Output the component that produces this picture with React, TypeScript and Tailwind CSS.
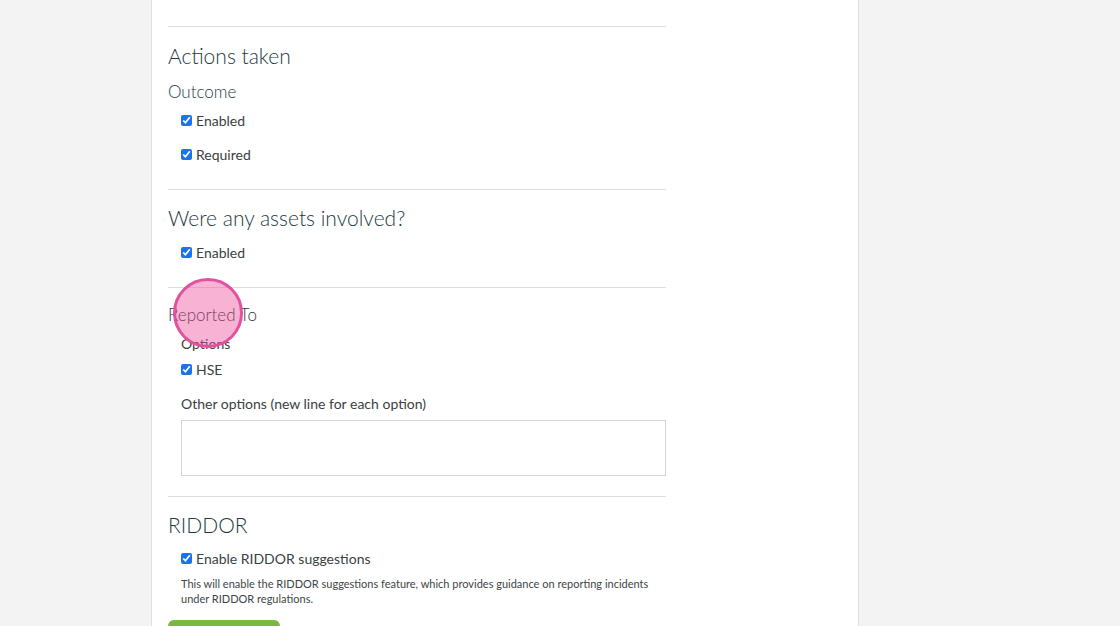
import React from 'react';

const font = { fontFamily: 'Lato, "Noto Sans", sans-serif' };

interface CheckRowProps {
  label: string;
  className?: string;
}

const CheckRow = ({ label, className = '' }: CheckRowProps) => (
  <label className={`flex items-center h-5 pl-[13px] text-[14px] text-[#394143] ${className}`}>
    <input type="checkbox" defaultChecked className="w-[11px] h-[11px] mr-[4px] accent-[#1a73e8]" />
    {label}
  </label>
);

const Divider = ({ className = '' }: { className?: string }) => (
  <div className={`h-px bg-[#dedede] ${className}`} />
);

export default function App() {
  return (
    <div className="w-[1120px] h-[626px] overflow-hidden bg-[#f3f3f3] relative" style={font}>
      <div className="ml-[151px] w-[708px] h-full bg-white border-x border-[#e0e0e0] px-4">
        <div className="w-[498px] flex flex-col">
          <Divider className="mt-[26px]" />

          <h2 className="mt-[16px] text-[21px] leading-[26px] font-light text-[#1e3a3f]">Actions taken</h2>
          <h3 className="mt-[12px] text-[17px] leading-[22px] font-light text-[#1e3a3f]">Outcome</h3>
          <CheckRow label="Enabled" className="mt-[7px]" />
          <CheckRow label="Required" className="mt-[14px]" />
          <Divider className="mt-[25px]" />

          <h2 className="mt-[15px] text-[21px] leading-[26px] font-light text-[#1e3a3f]">Were any assets involved?</h2>
          <CheckRow label="Enabled" className="mt-[11px]" />
          <Divider className="mt-[25px]" />

          <h3 className="mt-[16px] text-[17px] leading-[22px] font-light text-[#1e3a3f]">Reported To</h3>
          <div className="mt-[8px] pl-[13px] h-5 leading-5 text-[14px] text-[#394143]">Options</div>
          <CheckRow label="HSE" className="mt-[5px]" />
          <div className="mt-[15px] pl-[13px] h-5 leading-5 text-[14px] text-[#394143]">
            Other options (new line for each option)
          </div>
          <div className="mt-[6px] ml-[13px]">
            <textarea className="block w-full h-[56px] border border-[#d4d4d4] resize-none outline-none" />
          </div>
          <Divider className="mt-[20px]" />

          <h2 className="mt-[15px] text-[21px] leading-[26px] font-light text-[#1e3a3f]">RIDDOR</h2>
          <CheckRow label="Enable RIDDOR suggestions" className="mt-[10px]" />
          <p className="mt-[8px] pl-[13px] text-[11px] leading-[15px] text-[#3d4547]">
            This will enable the RIDDOR suggestions feature, which provides guidance on reporting incidents under RIDDOR regulations.
          </p>
          <button className="mt-[14px] w-[112px] h-[36px] rounded-md bg-[#78b843] text-white text-[14px]">
            Save
          </button>
        </div>
      </div>

      <div className="absolute left-[173px] top-[278px] w-[70px] h-[70px] rounded-full border-[3px] border-[#e2519d] bg-[rgba(236,72,153,0.42)]" />
    </div>
  );
}
